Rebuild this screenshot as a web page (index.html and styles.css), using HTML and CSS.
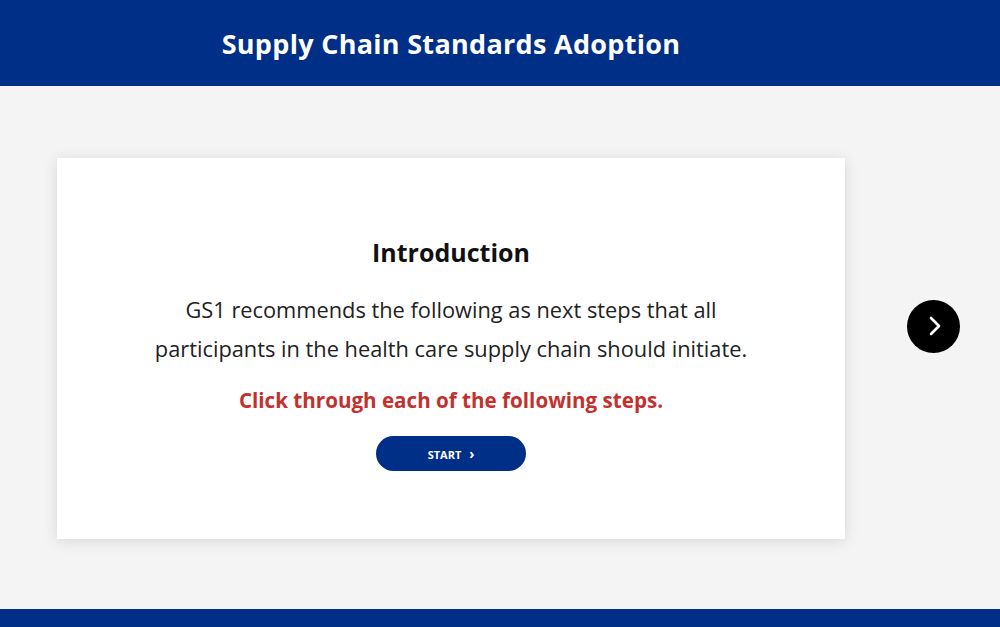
FILE: index.html
```html
<!DOCTYPE html>
<html lang="en">
<head>
    <meta charset="UTF-8">
    <title>Supply Chain Standards Adoption</title>
    <link rel="stylesheet" href="styles.css">
</head>
<body>
<header class="top-bar">
    <div class="wrap">
        <h1 class="page-title">Supply Chain Standards Adoption</h1>
    </div>
</header>

<main class="stage">
    <div class="wrap slider">
        <section class="slide-card">
            <h2 class="slide-title">Introduction</h2>
            <p class="slide-text">GS1 recommends the following as next steps that all<br>participants in the health care supply chain should initiate.</p>
            <p class="slide-hint">Click through each of the following steps.</p>
            <button class="start-button">START <span class="chev">&#8250;</span></button>
        </section>
        <button class="next-button" aria-label="Next">
            <svg width="14" height="20" viewBox="0 0 14 20"><path d="M3 2 L11 10 L3 18" fill="none" stroke="#fff" stroke-width="2.6" stroke-linecap="round" stroke-linejoin="round"/></svg>
        </button>
    </div>
</main>

<footer class="bottom-bar"></footer>
</body>
</html>
```

FILE: styles.css
```css
body {
  margin: 0;
  font-family: "Open Sans", "Noto Sans", sans-serif;
  background-color: #f4f4f4;
  color: #1a1a1a;
}
.wrap {
  width: 788px;
  margin-left: 57px;
}
.top-bar {
  background: #002f87;
  height: 86px;
  display: flex;
  align-items: center;
}
.page-title {
  margin: 0;
  text-align: center;
  color: #fff;
  font-family: "Open Sans", sans-serif;
  font-weight: 700;
  font-size: 27px;
  letter-spacing: 0.3px;
  padding-bottom: 0;
}
.stage {
  height: 523px;
  display: flex;
  align-items: center;
}
.slider {
  display: flex;
  align-items: center;
  position: relative;
  margin-top: 1px;
}
.slide-card {
  background: #fff;
  width: 788px;
  height: 381px;
  box-sizing: border-box;
  padding-top: 77px;
  text-align: center;
  box-shadow: 0 2px 14px rgba(0,0,0,0.12);
}
.slide-title {
  margin: 0 0 21px;
  font-size: 25px;
  font-weight: 700;
  color: #111;
}
.slide-text {
  margin: 0;
  font-size: 21.8px;
  line-height: 39px;
  color: #222;
}
.slide-hint {
  margin: 18px 0 22px;
  font-size: 20.6px;
  font-weight: 700;
  color: #c2312d;
}
.start-button {
  width: 150px;
  height: 35px;
  border: none;
  border-radius: 18px;
  background: #002f87;
  color: #fff;
  font-family: inherit;
  font-size: 11px;
  font-weight: 700;
  cursor: pointer;
}
.chev {
  margin-left: 5px;
  font-size: 14px;
}
.next-button {
  position: absolute;
  right: -115px;
  top: 142px;
  width: 53px;
  height: 53px;
  border-radius: 50%;
  border: none;
  background: #000;
  display: flex;
  align-items: center;
  justify-content: center;
  padding: 0 0 0 2px;
  cursor: pointer;
}
.bottom-bar {
  background: #002f87;
  height: 18px;
}
```
